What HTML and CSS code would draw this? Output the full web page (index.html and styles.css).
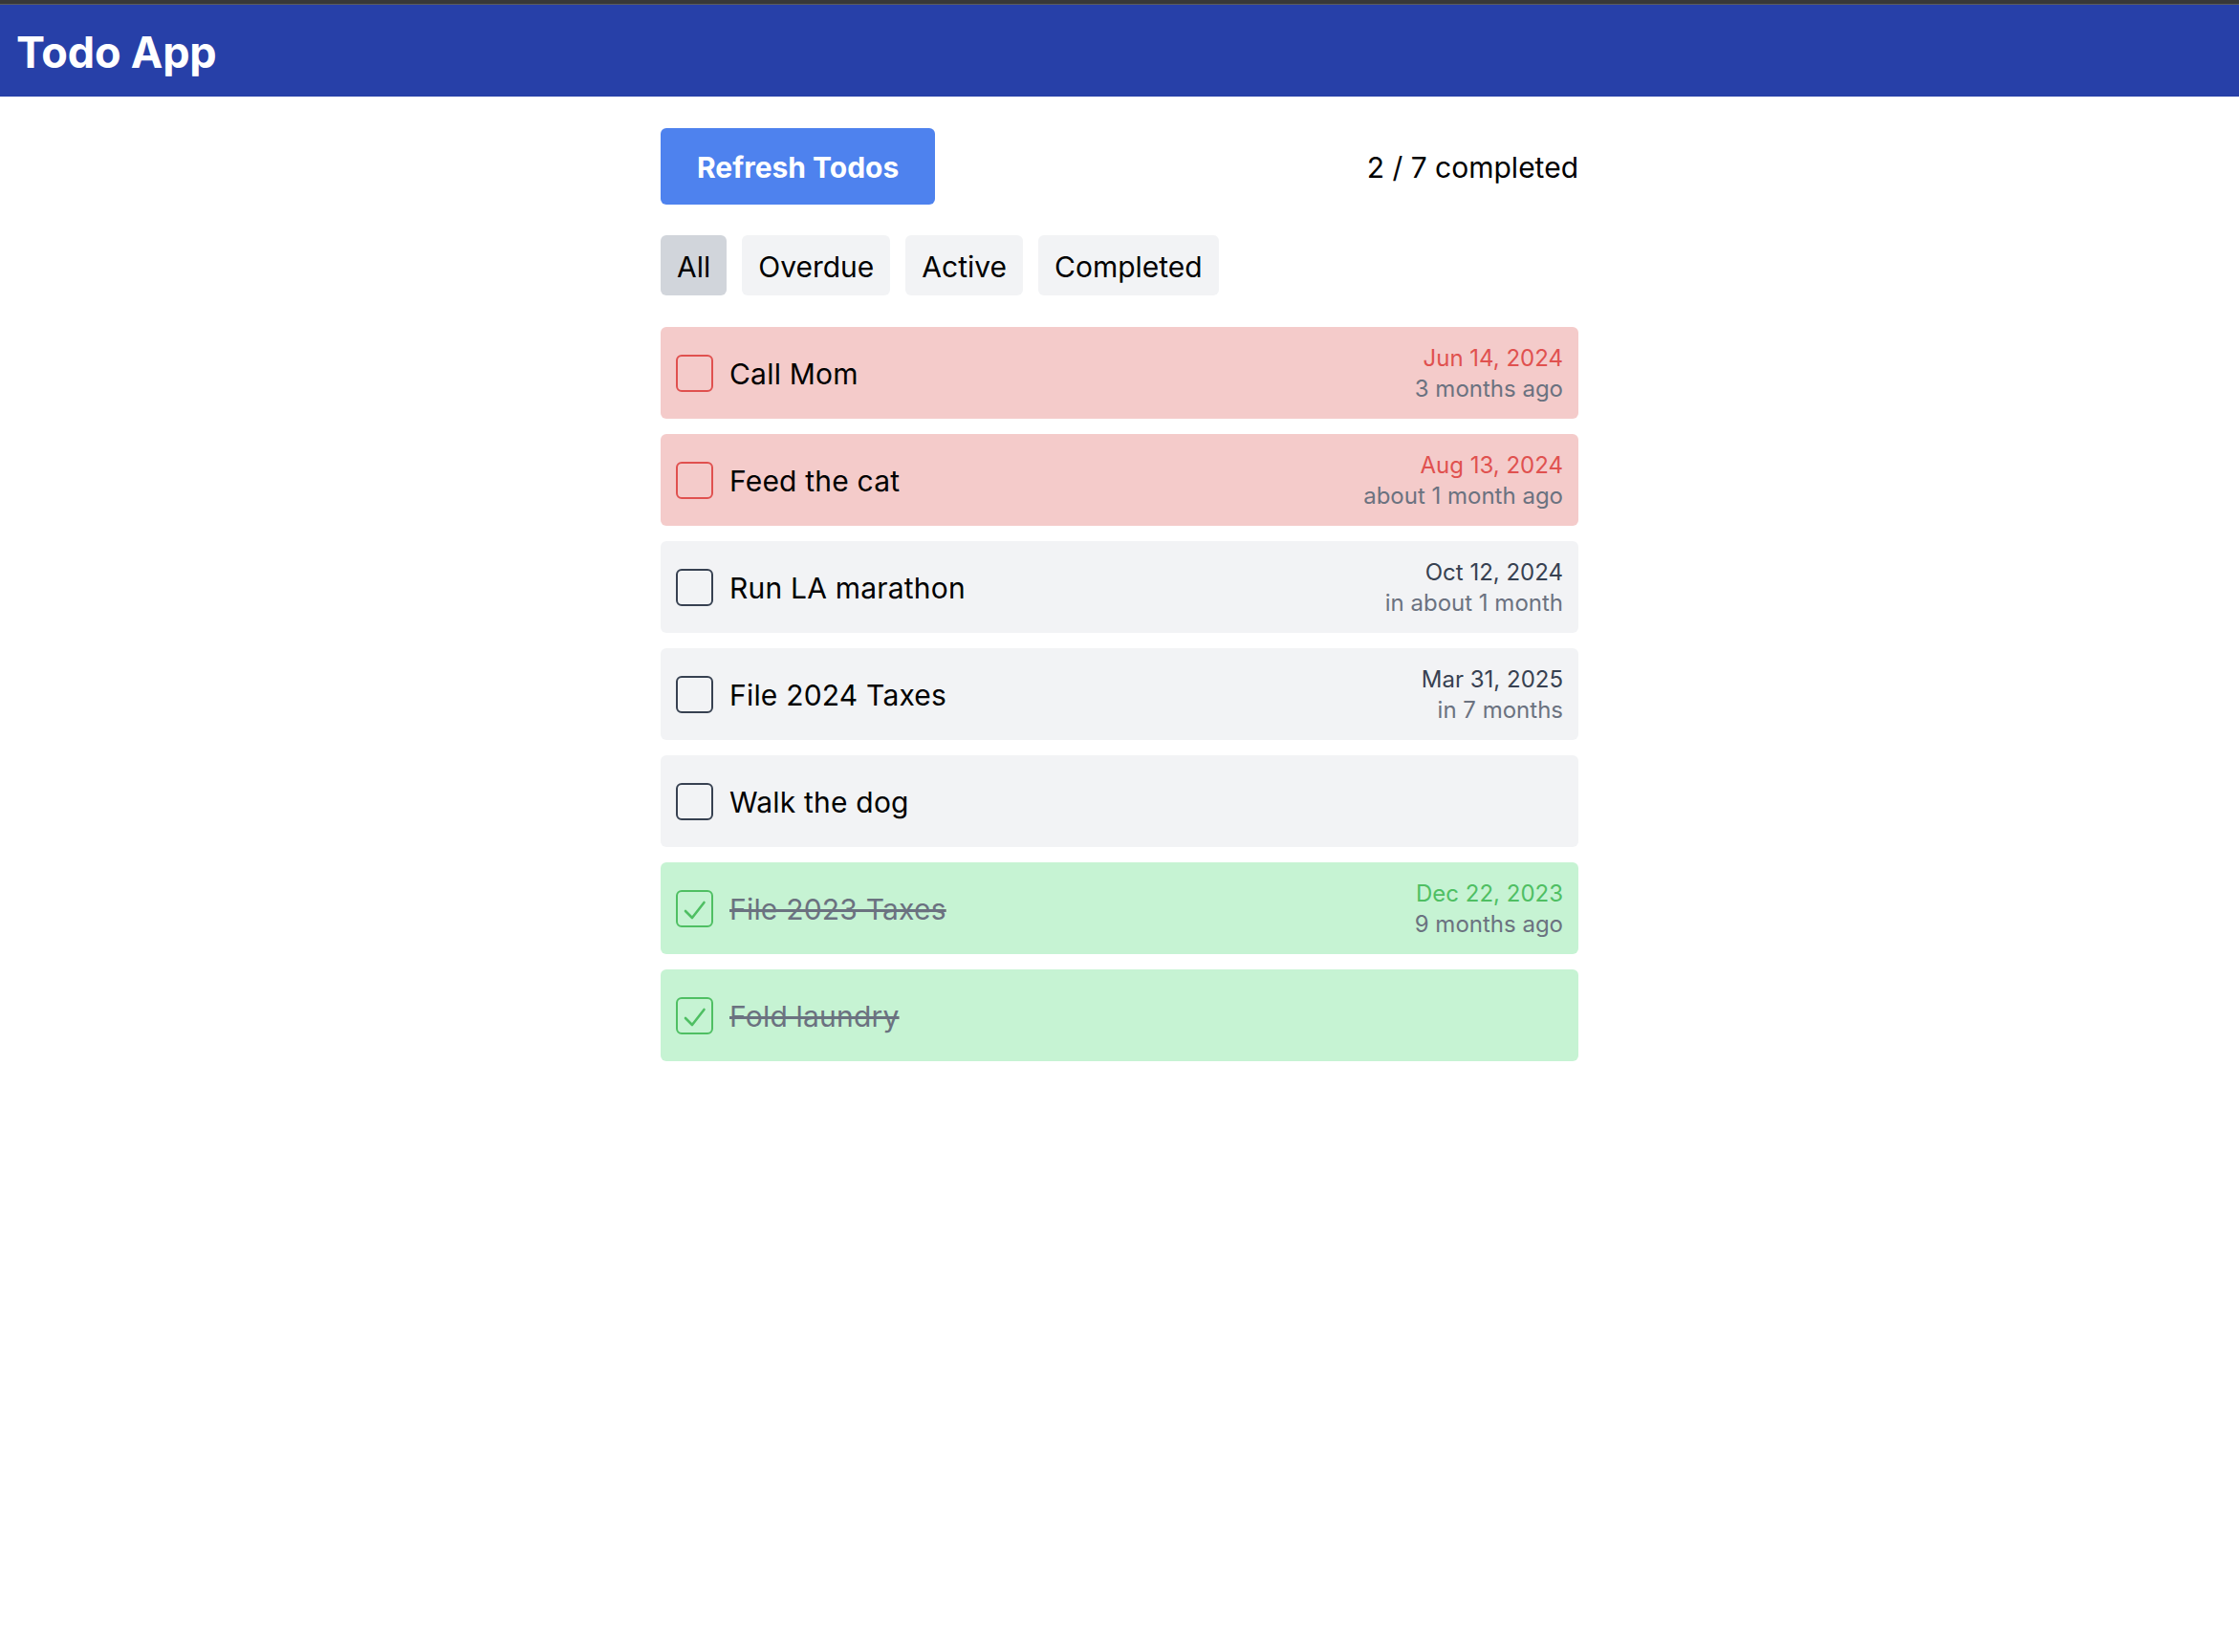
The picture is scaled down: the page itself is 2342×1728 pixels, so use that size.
FILE: index.html
```html
<!DOCTYPE html>
<html lang="en">
<head>
<meta charset="utf-8">
<title>Todo App</title>
<link rel="stylesheet" href="styles.css">
</head>
<body>
<div class="topstrip"></div>
<header class="appbar"><h1 class="apptitle">Todo App</h1></header>
<main class="content">
  <div class="toolbar">
    <button class="refresh">Refresh Todos</button>
    <div class="count">2 / 7 completed</div>
  </div>
  <div class="filters">
    <button class="filter active">All</button>
    <button class="filter">Overdue</button>
    <button class="filter">Active</button>
    <button class="filter">Completed</button>
  </div>
  <ul class="list">
    <li class="item overdue">
      <span class="box"></span>
      <span class="title">Call Mom</span>
      <div class="due"><div class="date">Jun 14, 2024</div><div class="rel">3 months ago</div></div>
    </li>
    <li class="item overdue">
      <span class="box"></span>
      <span class="title">Feed the cat</span>
      <div class="due"><div class="date">Aug 13, 2024</div><div class="rel">about 1 month ago</div></div>
    </li>
    <li class="item">
      <span class="box"></span>
      <span class="title">Run LA marathon</span>
      <div class="due"><div class="date">Oct 12, 2024</div><div class="rel">in about 1 month</div></div>
    </li>
    <li class="item">
      <span class="box"></span>
      <span class="title">File 2024 Taxes</span>
      <div class="due"><div class="date">Mar 31, 2025</div><div class="rel">in 7 months</div></div>
    </li>
    <li class="item">
      <span class="box"></span>
      <span class="title">Walk the dog</span>
    </li>
    <li class="item done">
      <span class="box"><svg viewBox="0 0 39 39" width="39" height="39"><path d="M10 22 L17 29 L29.5 13" fill="none" stroke="#4fbf63" stroke-width="2.6" stroke-linecap="round" stroke-linejoin="round"/></svg></span>
      <span class="title">File 2023 Taxes</span>
      <div class="due"><div class="date">Dec 22, 2023</div><div class="rel">9 months ago</div></div>
    </li>
    <li class="item done">
      <span class="box"><svg viewBox="0 0 39 39" width="39" height="39"><path d="M10 22 L17 29 L29.5 13" fill="none" stroke="#4fbf63" stroke-width="2.6" stroke-linecap="round" stroke-linejoin="round"/></svg></span>
      <span class="title">Fold laundry</span>
    </li>
  </ul>
</main>
</body>
</html>
```
FILE: styles.css
```css
* { box-sizing: border-box; }
body {
  margin: 0;
  background: #ffffff;
  font-family: Inter, "Noto Sans", "Liberation Sans", sans-serif;
  color: #000;
}
.topstrip {
  height: 5px;
  background: #383838;
  border-bottom: 1px solid #5c5c5c;
}
.appbar {
  height: 96px;
  background: #2740a8;
  display: flex;
  align-items: center;
  padding-left: 17px;
  padding-top: 2px;
}
.apptitle {
  margin: 0;
  color: #ffffff;
  font-size: 45px;
  font-weight: 700;
  letter-spacing: -0.2px;
}
.content {
  width: 960px;
  margin: 33px auto 0;
}
.toolbar {
  display: flex;
  justify-content: space-between;
  align-items: center;
  height: 80px;
}
.refresh {
  height: 80px;
  padding: 2px 38px 0;
  border: none;
  border-radius: 6px;
  background: #4e82ee;
  color: #ffffff;
  font-family: inherit;
  font-size: 30px;
  font-weight: 700;
}
.count {
  font-size: 30px;
  color: #000;
  padding-top: 2px;
}
.filters {
  display: flex;
  gap: 16px;
  margin-top: 32px;
}
.filter {
  height: 63px;
  padding: 2px 17px 0;
  border: none;
  border-radius: 6px;
  background: #f2f3f5;
  color: #000;
  font-family: inherit;
  font-size: 30px;
}
.filter.active { background: #d1d5db; }
.list {
  list-style: none;
  margin: 33px 0 0;
  padding: 0;
  display: flex;
  flex-direction: column;
  gap: 16px;
}
.item {
  height: 96px;
  padding: 0 16px;
  display: flex;
  align-items: center;
  border-radius: 6px;
  background: #f2f3f5;
}
.box {
  width: 39px;
  height: 39px;
  border: 2px solid #374151;
  border-radius: 6px;
  margin-right: 17px;
  flex: none;
  display: flex;
  align-items: center;
  justify-content: center;
  overflow: hidden;
}
.box svg { flex: none; }
.title {
  font-size: 30px;
  letter-spacing: 0.2px;
  color: #000;
  padding-top: 2px;
}
.due {
  margin-left: auto;
  text-align: right;
  font-size: 24px;
  line-height: 32px;
  padding-top: 2px;
}
.date { color: #374151; }
.rel { color: #6b7280; }
.item.overdue { background: #f4cbca; }
.item.overdue .box { border-color: #e0514f; }
.item.overdue .date { color: #e0514f; }
.item.done { background: #c6f3d3; }
.item.done .box { border-color: #4fbf63; }
.item.done .date { color: #4fbf63; }
.item.done .title { color: #6b7280; text-decoration: line-through; }
```
